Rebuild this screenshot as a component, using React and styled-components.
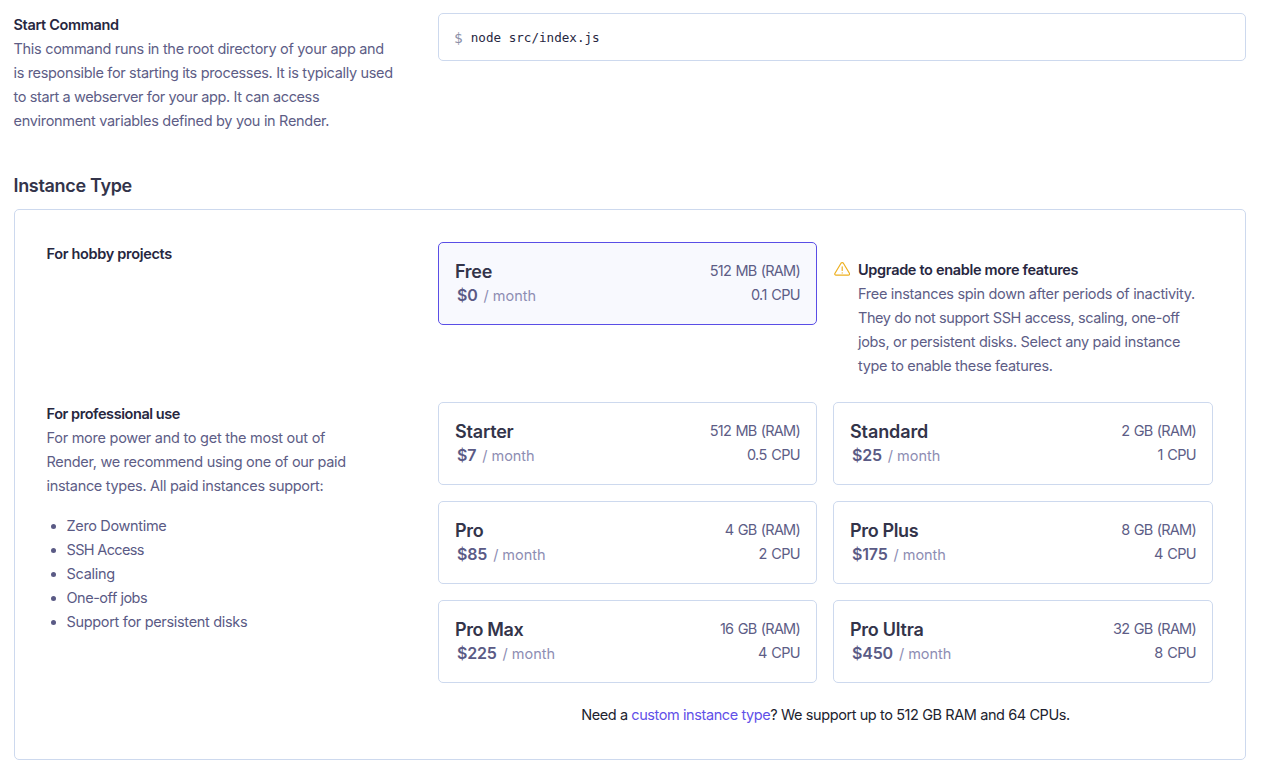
import React from "react";
import styled, { createGlobalStyle } from "styled-components";

const GlobalStyle = createGlobalStyle`
  *, *::before, *::after { box-sizing: border-box; }
  body {
    margin: 0;
    background: #fff;
    color: #20222e;
    font: 400 14.5px/24px Inter, "Liberation Sans", sans-serif;
  }
  h2, h3, p, ul { margin: 0; padding: 0; font: inherit; }
`;

const Page = styled.main`
  display: flex;
  flex-direction: column;
  padding: 13px 18px 13px 14px;
`;

const Columns = styled.section`
  display: grid;
  grid-template-columns: 391px 1fr;
`;

const SettingRow = styled(Columns)`
  grid-template-columns: 424px 1fr;
`;

const Side = styled.div`
  margin-left: -0.5px;
`;

const Label = styled.h3`
  && { font-weight: 600; }
  color: #27273f;
`;

const Copy = styled.p`
  color: #5d5d86;
`;

const Line = styled.span`
  display: block;
  white-space: nowrap;
  letter-spacing: ${(p) => p.$track}px;
`;

const CommandField = styled.div`
  display: flex;
  align-items: center;
  gap: 8px;
  height: 48px;
  padding: 1px 15px 0;
  border: 1px solid #cdd9ee;
  border-radius: 5px;
  color: #27273f;
  font: 12.6px/24px "DejaVu Sans Mono", monospace;
`;

const Prompt = styled.span`
  color: #8b90a8;
  font-size: 14.5px;
`;

const Heading = styled.h2`
  && {
    margin: 40px 0 11px -0.5px;
    font-size: 18px;
    font-weight: 600;
    line-height: 25px;
    letter-spacing: -0.32px;
  }
  color: #33344a;
`;

const Panel = styled.section`
  display: flex;
  flex-direction: column;
  gap: 24px;
  height: 551px;
  padding: 32px;
  border: 1px solid #cdd9ee;
  border-radius: 5px;
`;

const Plans = styled.div`
  display: grid;
  grid-template-columns: 379px 380px;
  gap: 16px;
`;

const Card = styled.article`
  display: flex;
  justify-content: space-between;
  height: 83px;
  padding: 16px;
  border: 1px solid ${(p) => (p.$selected ? "#5a4ee6" : "#cdd9ee")};
  border-radius: 5px;
  background: ${(p) => (p.$selected ? "#f8f9fe" : "#fff")};
`;

const PlanName = styled.div`
  padding-top: 1px;
  color: #33344a;
  font-size: 18px;
  font-weight: 600;
  line-height: 23px;
`;

const Price = styled.div`
  display: flex;
  align-items: baseline;
  gap: 6px;
  padding-left: 2px;
  color: #8d8db3;
`;

const Amount = styled.strong`
  color: #5a5a85;
  font-size: 16px;
  font-weight: 600;
  letter-spacing: -0.2px;
`;

const Specs = styled.div`
  color: #5d5d86;
  text-align: right;
  word-spacing: 1px;
`;

const Notice = styled.aside`
  display: flex;
  gap: 8px;
  padding: 16px 0 0 1px;
`;

const WarningIcon = styled.svg`
  flex: none;
  width: 16px;
  height: 16px;
  margin-top: 3px;
`;

const Features = styled.ul`
  && {
    margin-top: 16px;
    padding-left: 20px;
  }
  color: #5a5a85;
`;

const Footnote = styled.p`
  && { margin-top: 20px; }
  text-align: center;
`;

const Link = styled.a`
  color: #5f50e8;
`;

const lines = (items) =>
  items.map(([text, track]) => (
    <Line key={text} $track={track}>{text}</Line>
  ));

function Plan({ name, nameTrack, price, ram, ramTrack, cpu, selected }) {
  return (
    <Card $selected={selected}>
      <div>
        <PlanName><Line $track={nameTrack}>{name}</Line></PlanName>
        <Price>
          <Amount>{price}</Amount>
          <Line $track={-0.03}>/ month</Line>
        </Price>
      </div>
      <Specs>
        <Line $track={ramTrack}>{ram}</Line>
        <Line $track={-0.6}>{cpu}</Line>
      </Specs>
    </Card>
  );
}

const PAID = [
  { name: "Starter", nameTrack: -0.2, price: "$7", ram: "512 MB (RAM)", ramTrack: -0.76, cpu: "0.5 CPU" },
  { name: "Standard", nameTrack: -0.1, price: "$25", ram: "2 GB (RAM)", ramTrack: -0.76, cpu: "1 CPU" },
  { name: "Pro", nameTrack: -0.25, price: "$85", ram: "4 GB (RAM)", ramTrack: -0.76, cpu: "2 CPU" },
  { name: "Pro Plus", nameTrack: -0.35, price: "$175", ram: "8 GB (RAM)", ramTrack: -0.76, cpu: "4 CPU" },
  { name: "Pro Max", nameTrack: -0.4, price: "$225", ram: "16 GB (RAM)", ramTrack: -0.76, cpu: "4 CPU" },
  { name: "Pro Ultra", nameTrack: -0.25, price: "$450", ram: "32 GB (RAM)", ramTrack: -0.76, cpu: "8 CPU" },
];

export default function App() {
  return (
    <>
      <GlobalStyle />
      <Page>
        <SettingRow>
          <Side>
            <Label>{lines([["Start Command", -0.34]])}</Label>
            <Copy>
              {lines([
                ["This command runs in the root directory of your app and", -0.3],
                ["is responsible for starting its processes. It is typically used", -0.335],
                ["to start a webserver for your app. It can access", -0.38],
                ["environment variables defined by you in Render.", -0.31],
              ])}
            </Copy>
          </Side>
          <CommandField><Prompt>$</Prompt>node src/index.js</CommandField>
        </SettingRow>

        <Heading>Instance Type</Heading>

        <Panel>
          <Columns>
            <Side><Label>{lines([["For hobby projects", -0.32]])}</Label></Side>
            <Plans>
              <Plan selected name="Free" nameTrack={-0.3} price="$0" ram="512 MB (RAM)" ramTrack={-0.76} cpu="0.1 CPU" />
              <Notice>
                <WarningIcon viewBox="0 0 16 16" fill="none" stroke="#edb021" strokeWidth="1.2" strokeLinecap="round" strokeLinejoin="round">
                  <path d="M7 2.200 1 12.200C.4 13.200 1 14.200 2 14.200h12.400c1 0 1.500-1 1-2L9.400 2.200C8.800 1.300 7.600 1.300 7 2.200Z" />
                  <path d="M8.200 5.800v3.700M8.200 11.800v.2" />
                </WarningIcon>
                <div>
                  <Label>{lines([["Upgrade to enable more features", -0.32]])}</Label>
                  <Copy>
                    {lines([
                      ["Free instances spin down after periods of inactivity.", -0.31],
                      ["They do not support SSH access, scaling, one-off", -0.42],
                      ["jobs, or persistent disks. Select any paid instance", -0.32],
                      ["type to enable these features.", -0.33],
                    ])}
                  </Copy>
                </div>
              </Notice>
            </Plans>
          </Columns>

          <Columns>
            <Side>
              <Label>{lines([["For professional use", -0.43]])}</Label>
              <Copy>
                {lines([
                  ["For more power and to get the most out of", -0.26],
                  ["Render, we recommend using one of our paid", -0.3],
                  ["instance types. All paid instances support:", -0.31],
                ])}
              </Copy>
              <Features>
                <li>{lines([["Zero Downtime", -0.34]])}</li>
                <li>{lines([["SSH Access", -0.65]])}</li>
                <li>{lines([["Scaling", -0.3]])}</li>
                <li>{lines([["One-off jobs", -0.48]])}</li>
                <li>{lines([["Support for persistent disks", -0.32]])}</li>
              </Features>
            </Side>
            <div>
              <Plans>
                {PAID.map((plan) => <Plan key={plan.name} {...plan} />)}
              </Plans>
              <Footnote>
                <Line $track={-0.41}>
                  Need a <Link>custom instance type</Link>? We support up to 512 GB RAM and 64 CPUs.
                </Line>
              </Footnote>
            </div>
          </Columns>
        </Panel>
      </Page>
    </>
  );
}
